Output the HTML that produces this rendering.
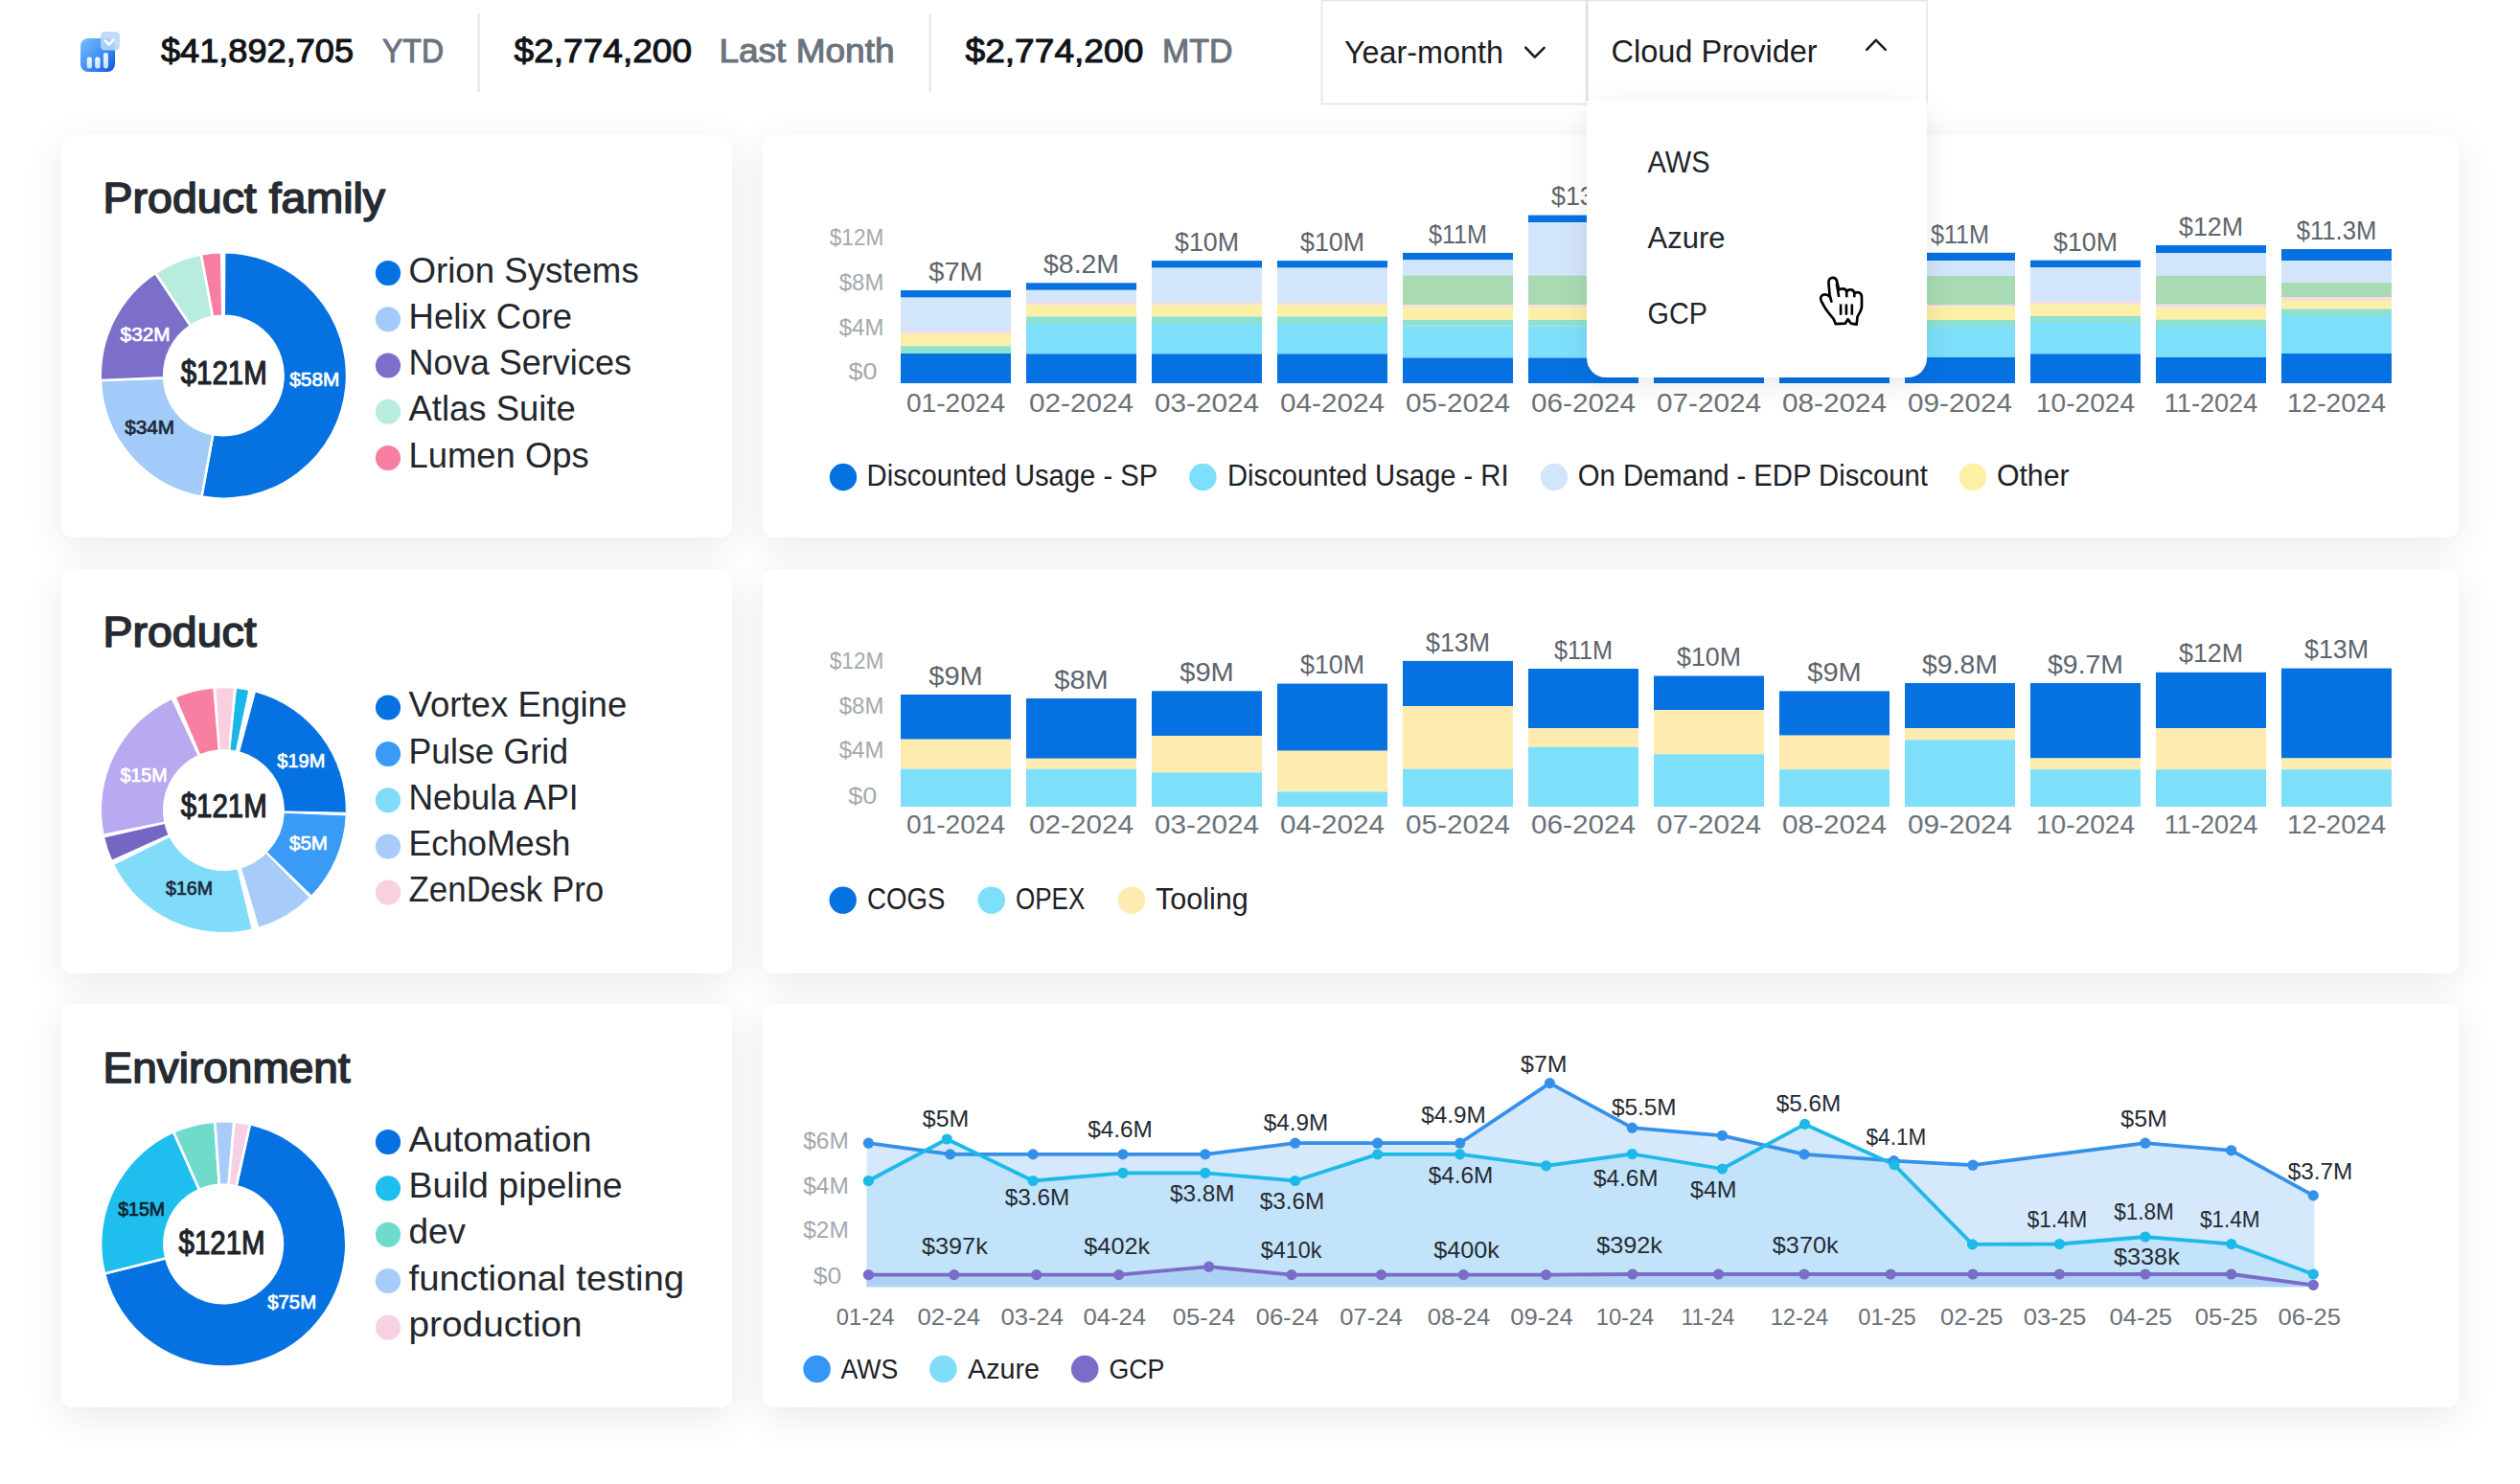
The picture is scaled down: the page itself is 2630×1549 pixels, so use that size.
<!DOCTYPE html>
<html><head><meta charset="utf-8"><title>Dashboard</title>
<style>
html,body{margin:0;padding:0;background:#fff;}
body{width:2630px;height:1549px;overflow:hidden;position:relative;font-family:"Liberation Sans", sans-serif;}
.card{position:absolute;background:#fff;border-radius:12px;box-shadow:0 10px 40px rgba(0,0,0,0.085);}
svg{position:absolute;left:0;top:0;font-family:"Liberation Sans", sans-serif;}
.dd{position:absolute;left:1656px;top:105px;width:355px;height:289px;background:#fff;border-radius:0 0 20px 20px;box-shadow:0 8px 30px rgba(0,0,0,0.085);}
</style></head>
<body>
<div class="card" style="left:64px;top:141px;width:700px;height:420px"></div><div class="card" style="left:795.5px;top:141px;width:1770.5px;height:420px"></div><div class="card" style="left:64px;top:593.5px;width:700px;height:422.5px"></div><div class="card" style="left:795.5px;top:593.5px;width:1770.5px;height:422.5px"></div><div class="card" style="left:64px;top:1048px;width:700px;height:421px"></div><div class="card" style="left:795.5px;top:1048px;width:1770.5px;height:421px"></div>
<svg width="2630" height="1549" viewBox="0 0 2630 1549">
<defs>
<linearGradient id="ig" x1="0" y1="0" x2="1" y2="1">
<stop offset="0" stop-color="#78c0ff"/><stop offset="0.55" stop-color="#3d8ef5"/><stop offset="1" stop-color="#0b55d8"/></linearGradient>
<linearGradient id="bg2" x1="0" y1="0" x2="0" y2="1">
<stop offset="0" stop-color="#ffffff" stop-opacity="0.95"/><stop offset="1" stop-color="#dbe9ff" stop-opacity="0.9"/></linearGradient>
<filter id="blur1" x="-20%" y="-20%" width="140%" height="140%"><feGaussianBlur stdDeviation="0.6"/></filter>
</defs>
<rect x="84" y="40" width="36" height="35" rx="8" fill="url(#ig)"/>
<rect x="90.7" y="59.6" width="5.2" height="12" rx="2.4" fill="url(#bg2)"/>
<rect x="99.2" y="59.6" width="5.4" height="12" rx="2.4" fill="url(#bg2)"/>
<rect x="107.9" y="55" width="5" height="16.6" rx="2.4" fill="url(#bg2)"/>
<rect x="105" y="33" width="20" height="19.5" rx="4.5" fill="#b9d6fb" fill-opacity="0.88" filter="url(#blur1)"/>
<polyline points="109.6,42.4 114,46.6 118.6,41.2" fill="none" stroke="#fff" stroke-width="2.4" stroke-linecap="round" stroke-linejoin="round"/>
<text x="168" y="65.4" font-size="35.5" fill="#111418" stroke="#111418" stroke-width="1.06" stroke-linejoin="round" textLength="201" lengthAdjust="spacingAndGlyphs">$41,892,705</text>
<text x="399" y="65.4" font-size="35.5" fill="#6b737d" stroke="#6b737d" stroke-width="1.06" stroke-linejoin="round" textLength="64" lengthAdjust="spacingAndGlyphs">YTD</text>
<text x="536.6" y="65.4" font-size="35.5" fill="#111418" stroke="#111418" stroke-width="1.06" stroke-linejoin="round" textLength="185.4" lengthAdjust="spacingAndGlyphs">$2,774,200</text>
<text x="750.4" y="65.4" font-size="35.5" fill="#6b737d" stroke="#6b737d" stroke-width="1.06" stroke-linejoin="round" textLength="183.2" lengthAdjust="spacingAndGlyphs">Last Month</text>
<text x="1007.5" y="65.4" font-size="35.5" fill="#111418" stroke="#111418" stroke-width="1.06" stroke-linejoin="round" textLength="185.8" lengthAdjust="spacingAndGlyphs">$2,774,200</text>
<text x="1213" y="65.4" font-size="35.5" fill="#6b737d" stroke="#6b737d" stroke-width="1.06" stroke-linejoin="round" textLength="73.5" lengthAdjust="spacingAndGlyphs">MTD</text>
<rect x="498.6" y="14" width="2" height="82" fill="#e3e4e6"/>
<rect x="969.6" y="14" width="2" height="82" fill="#e3e4e6"/>
<rect x="1379.5" y="0.5" width="277" height="108" fill="#fff" stroke="#e4e4e4" stroke-width="1.6"/>
<rect x="1656.5" y="0.5" width="354.5" height="108" fill="#fff" stroke="#e4e4e4" stroke-width="1.6"/>
<rect x="1654.8" y="0" width="2.4" height="106" fill="#e1e1e1"/>
<text x="1403" y="65.5" font-size="33" fill="#1c1d1f" textLength="166" lengthAdjust="spacingAndGlyphs">Year-month</text>
<polyline points="1592.2,49.6 1601.8,59.6 1611.6,49.8" fill="none" stroke="#1c1d1f" stroke-width="2.6" stroke-linecap="round" stroke-linejoin="round"/>
<text x="1681.4" y="65.3" font-size="33" fill="#1c1d1f" textLength="215.3" lengthAdjust="spacingAndGlyphs">Cloud Provider</text>
<polyline points="1948.2,51.8 1957.8,41.8 1967.8,51.8" fill="none" stroke="#1c1d1f" stroke-width="2.6" stroke-linecap="round" stroke-linejoin="round"/>
<text x="107.6" y="222" font-size="45" fill="#262b31" stroke="#262b31" stroke-width="1.62" stroke-linejoin="round" textLength="294.5" lengthAdjust="spacingAndGlyphs">Product family</text>
<path d="M234.07,263.30 A128.70000000000002,128.70000000000002 0 1 1 210.39,518.63 L222.28,453.20 A62.2,62.2 0 1 0 233.73,329.80 Z" fill="#0672e2" stroke="#fff" stroke-width="2.6" stroke-linejoin="miter"/>
<path d="M210.39,518.63 A128.70000000000002,128.70000000000002 0 0 1 104.79,396.94 L171.25,394.39 A62.2,62.2 0 0 0 222.28,453.20 Z" fill="#a3cbf9" stroke="#fff" stroke-width="2.6" stroke-linejoin="miter"/>
<path d="M104.79,396.94 A128.70000000000002,128.70000000000002 0 0 1 162.18,284.80 L198.98,340.19 A62.2,62.2 0 0 0 171.25,394.39 Z" fill="#7b6fca" stroke="#fff" stroke-width="2.6" stroke-linejoin="miter"/>
<path d="M162.18,284.80 A128.70000000000002,128.70000000000002 0 0 1 209.95,265.46 L222.06,330.84 A62.2,62.2 0 0 0 198.98,340.19 Z" fill="#b8ecdf" stroke="#fff" stroke-width="2.6" stroke-linejoin="miter"/>
<path d="M209.95,265.46 A128.70000000000002,128.70000000000002 0 0 1 231.15,263.32 L232.31,329.81 A62.2,62.2 0 0 0 222.06,330.84 Z" fill="#f77fa1" stroke="#fff" stroke-width="2.6" stroke-linejoin="miter"/>
<text x="233.7" y="400.5" font-size="34.5" fill="#1f242a" stroke="#1f242a" stroke-width="1.24" stroke-linejoin="round" text-anchor="middle" textLength="90" lengthAdjust="spacingAndGlyphs">$121M</text>
<text x="328.3" y="402.7" font-size="20" fill="#ffffff" stroke="#ffffff" stroke-width="0.72" stroke-linejoin="round" text-anchor="middle" textLength="52" lengthAdjust="spacingAndGlyphs">$58M</text>
<text x="151.6" y="355.6" font-size="20" fill="#ffffff" stroke="#ffffff" stroke-width="0.72" stroke-linejoin="round" text-anchor="middle" textLength="52" lengthAdjust="spacingAndGlyphs">$32M</text>
<text x="156.2" y="453.2" font-size="20" fill="#1e2a3a" stroke="#1e2a3a" stroke-width="0.72" stroke-linejoin="round" text-anchor="middle" textLength="52" lengthAdjust="spacingAndGlyphs">$34M</text>
<circle cx="405" cy="285" r="13.1" fill="#0672e2"/>
<text x="426.5" y="294.6" font-size="36" fill="#23272d" textLength="240.2" lengthAdjust="spacingAndGlyphs">Orion Systems</text>
<circle cx="405" cy="333.3" r="13.1" fill="#a3cbf9"/>
<text x="426.5" y="342.90000000000003" font-size="36" fill="#23272d" textLength="170.5" lengthAdjust="spacingAndGlyphs">Helix Core</text>
<circle cx="405" cy="381.5" r="13.1" fill="#7b6fca"/>
<text x="426.5" y="391.1" font-size="36" fill="#23272d" textLength="232.5" lengthAdjust="spacingAndGlyphs">Nova Services</text>
<circle cx="405" cy="429.7" r="13.1" fill="#b8ecdf"/>
<text x="426.5" y="439.3" font-size="36" fill="#23272d" textLength="174.2" lengthAdjust="spacingAndGlyphs">Atlas Suite</text>
<circle cx="405" cy="478" r="13.1" fill="#f77fa1"/>
<text x="426.5" y="487.6" font-size="36" fill="#23272d" textLength="188.2" lengthAdjust="spacingAndGlyphs">Lumen Ops</text>
<text x="107.6" y="675.4" font-size="45" fill="#262b31" stroke="#262b31" stroke-width="1.62" stroke-linejoin="round" textLength="160" lengthAdjust="spacingAndGlyphs">Product</text>
<path d="M266.50,722.06 A127.9,127.9 0 0 1 361.27,848.28 L296.39,846.92 A63.0,63.0 0 0 0 249.71,784.75 Z" fill="#0672e2" stroke="#fff" stroke-width="1.0" stroke-linejoin="miter"/>
<path d="M361.19,850.96 A127.9,127.9 0 0 1 325.09,934.77 L278.57,889.52 A63.0,63.0 0 0 0 296.34,848.24 Z" fill="#3a9bf7" stroke="#fff" stroke-width="1.0" stroke-linejoin="miter"/>
<path d="M323.21,936.67 A127.9,127.9 0 0 1 269.94,968.17 L251.40,905.97 A63.0,63.0 0 0 0 277.64,890.46 Z" fill="#a7ccf9" stroke="#fff" stroke-width="1.0" stroke-linejoin="miter"/>
<path d="M263.04,970.02 A127.9,127.9 0 0 1 118.84,902.47 L176.97,873.61 A63.0,63.0 0 0 0 248.00,906.88 Z" fill="#80dcf9" stroke="#fff" stroke-width="1.0" stroke-linejoin="miter"/>
<path d="M116.74,898.03 A127.9,127.9 0 0 1 108.68,873.94 L171.97,859.56 A63.0,63.0 0 0 0 175.94,871.43 Z" fill="#7466c4" stroke="#fff" stroke-width="1.0" stroke-linejoin="miter"/>
<path d="M108.02,870.88 A127.9,127.9 0 0 1 179.35,729.68 L206.78,788.50 A63.0,63.0 0 0 0 171.64,858.05 Z" fill="#b9a9f1" stroke="#fff" stroke-width="1.0" stroke-linejoin="miter"/>
<path d="M183.43,727.87 A127.9,127.9 0 0 1 222.70,718.15 L228.13,782.82 A63.0,63.0 0 0 0 208.78,787.61 Z" fill="#f77fa1" stroke="#fff" stroke-width="1.0" stroke-linejoin="miter"/>
<path d="M224.92,717.98 A127.9,127.9 0 0 1 244.32,718.17 L238.78,782.83 A63.0,63.0 0 0 0 229.22,782.74 Z" fill="#f9d0df" stroke="#fff" stroke-width="1.0" stroke-linejoin="miter"/>
<path d="M246.55,718.38 A127.9,127.9 0 0 1 259.77,720.45 L246.39,783.95 A63.0,63.0 0 0 0 239.88,782.93 Z" fill="#19b6e6" stroke="#fff" stroke-width="1.0" stroke-linejoin="miter"/>
<text x="233.7" y="852.7" font-size="34.5" fill="#1f242a" stroke="#1f242a" stroke-width="1.24" stroke-linejoin="round" text-anchor="middle" textLength="90" lengthAdjust="spacingAndGlyphs">$121M</text>
<text x="314.3" y="800.9" font-size="20" fill="#ffffff" stroke="#ffffff" stroke-width="0.72" stroke-linejoin="round" text-anchor="middle" textLength="50" lengthAdjust="spacingAndGlyphs">$19M</text>
<text x="322" y="886.8" font-size="20" fill="#ffffff" stroke="#ffffff" stroke-width="0.72" stroke-linejoin="round" text-anchor="middle" textLength="40" lengthAdjust="spacingAndGlyphs">$5M</text>
<text x="150" y="816.4" font-size="20" fill="#ffffff" stroke="#ffffff" stroke-width="0.72" stroke-linejoin="round" text-anchor="middle" textLength="49" lengthAdjust="spacingAndGlyphs">$15M</text>
<text x="197.5" y="933.6" font-size="20" fill="#1e2a3a" stroke="#1e2a3a" stroke-width="0.72" stroke-linejoin="round" text-anchor="middle" textLength="49" lengthAdjust="spacingAndGlyphs">$16M</text>
<circle cx="405" cy="738.5" r="13.1" fill="#0672e2"/>
<text x="426.5" y="748.1" font-size="36" fill="#23272d" textLength="227.79999999999998" lengthAdjust="spacingAndGlyphs">Vortex Engine</text>
<circle cx="405" cy="787" r="13.1" fill="#3a9bf7"/>
<text x="426.5" y="796.6" font-size="36" fill="#23272d" textLength="166.5" lengthAdjust="spacingAndGlyphs">Pulse Grid</text>
<circle cx="405" cy="835.3" r="13.1" fill="#80dcf9"/>
<text x="426.5" y="844.9" font-size="36" fill="#23272d" textLength="177.2" lengthAdjust="spacingAndGlyphs">Nebula API</text>
<circle cx="405" cy="883.6" r="13.1" fill="#a7ccf9"/>
<text x="426.5" y="893.2" font-size="36" fill="#23272d" textLength="168.89999999999998" lengthAdjust="spacingAndGlyphs">EchoMesh</text>
<circle cx="405" cy="931.6" r="13.1" fill="#f9d0df"/>
<text x="426.5" y="941.2" font-size="36" fill="#23272d" textLength="203.7" lengthAdjust="spacingAndGlyphs">ZenDesk Pro</text>
<text x="107.6" y="1129.7" font-size="45" fill="#262b31" stroke="#262b31" stroke-width="1.62" stroke-linejoin="round" textLength="258" lengthAdjust="spacingAndGlyphs">Environment</text>
<path d="M260.93,1173.34 A128.1,128.1 0 1 1 108.91,1329.39 L173.33,1313.33 A61.7,61.7 0 1 0 246.55,1238.16 Z" fill="#0672e2" stroke="#fff" stroke-width="2.6" stroke-linejoin="miter"/>
<path d="M108.91,1329.39 A128.1,128.1 0 0 1 181.10,1181.37 L208.10,1242.03 A61.7,61.7 0 0 0 173.33,1313.33 Z" fill="#1ebfee" stroke="#fff" stroke-width="2.6" stroke-linejoin="miter"/>
<path d="M181.10,1181.37 A128.1,128.1 0 0 1 224.26,1170.61 L228.90,1236.85 A61.7,61.7 0 0 0 208.10,1242.03 Z" fill="#6fdccb" stroke="#fff" stroke-width="2.6" stroke-linejoin="miter"/>
<path d="M224.26,1170.61 A128.1,128.1 0 0 1 244.36,1170.79 L238.58,1236.93 A61.7,61.7 0 0 0 228.90,1236.85 Z" fill="#a7ccf9" stroke="#fff" stroke-width="2.6" stroke-linejoin="miter"/>
<path d="M244.36,1170.79 A128.1,128.1 0 0 1 260.93,1173.34 L246.55,1238.16 A61.7,61.7 0 0 0 238.58,1236.93 Z" fill="#f6d1e4" stroke="#fff" stroke-width="2.6" stroke-linejoin="miter"/>
<text x="231.6" y="1308.7" font-size="34.5" fill="#1f242a" stroke="#1f242a" stroke-width="1.24" stroke-linejoin="round" text-anchor="middle" textLength="90" lengthAdjust="spacingAndGlyphs">$121M</text>
<text x="147.7" y="1268.5" font-size="20" fill="#10202c" stroke="#10202c" stroke-width="0.72" stroke-linejoin="round" text-anchor="middle" textLength="49" lengthAdjust="spacingAndGlyphs">$15M</text>
<text x="304.7" y="1365.7" font-size="20" fill="#ffffff" stroke="#ffffff" stroke-width="0.72" stroke-linejoin="round" text-anchor="middle" textLength="51" lengthAdjust="spacingAndGlyphs">$75M</text>
<circle cx="405" cy="1192" r="13.1" fill="#0672e2"/>
<text x="426.5" y="1201.6" font-size="36" fill="#23272d" textLength="190.89999999999998" lengthAdjust="spacingAndGlyphs">Automation</text>
<circle cx="405" cy="1240.4" r="13.1" fill="#1ebfee"/>
<text x="426.5" y="1250.0" font-size="36" fill="#23272d" textLength="223.2" lengthAdjust="spacingAndGlyphs">Build pipeline</text>
<circle cx="405" cy="1288.8" r="13.1" fill="#6fdccb"/>
<text x="426.5" y="1298.3999999999999" font-size="36" fill="#23272d" textLength="59.5" lengthAdjust="spacingAndGlyphs">dev</text>
<circle cx="405" cy="1337" r="13.1" fill="#a7ccf9"/>
<text x="426.5" y="1346.6" font-size="36" fill="#23272d" textLength="287.7" lengthAdjust="spacingAndGlyphs">functional testing</text>
<circle cx="405" cy="1385.7" r="13.1" fill="#f6d1e4"/>
<text x="426.5" y="1395.3" font-size="36" fill="#23272d" textLength="181.2" lengthAdjust="spacingAndGlyphs">production</text>
<text x="922.3" y="256" font-size="23.5" fill="#a4a9ae" text-anchor="end" textLength="56.5" lengthAdjust="spacingAndGlyphs">$12M</text>
<text x="922.3" y="303.1" font-size="23.5" fill="#a4a9ae" text-anchor="end" textLength="46.5" lengthAdjust="spacingAndGlyphs">$8M</text>
<text x="922.3" y="349.6" font-size="23.5" fill="#a4a9ae" text-anchor="end" textLength="46.5" lengthAdjust="spacingAndGlyphs">$4M</text>
<text x="915.5" y="396" font-size="23.5" fill="#a4a9ae" text-anchor="end" textLength="30" lengthAdjust="spacingAndGlyphs">$0</text>
<rect x="940" y="303" width="115" height="7.60" fill="#0672e2"/>
<rect x="940" y="310.6" width="115" height="35.20" fill="#d3e5fb"/>
<rect x="940" y="345.8" width="115" height="3.10" fill="#f8dcdc"/>
<rect x="940" y="348.9" width="115" height="12.30" fill="#fcf0a6"/>
<rect x="940" y="361.2" width="115" height="7.80" fill="#8fe1cf"/>
<rect x="940" y="369.0" width="115" height="31.00" fill="#0672e2"/>
<text x="997.5" y="292.8" font-size="28" fill="#5d646c" text-anchor="middle" textLength="56.5" lengthAdjust="spacingAndGlyphs">$7M</text>
<text x="997.5" y="430" font-size="27.6" fill="#6b7178" text-anchor="middle" textLength="103.2" lengthAdjust="spacingAndGlyphs">01-2024</text>
<rect x="1071" y="295.3" width="115" height="7.50" fill="#0672e2"/>
<rect x="1071" y="302.8" width="115" height="13.00" fill="#d3e5fb"/>
<rect x="1071" y="315.8" width="115" height="2.40" fill="#f8dcdc"/>
<rect x="1071" y="318.2" width="115" height="12.20" fill="#fcf0a6"/>
<rect x="1071" y="330.4" width="115" height="7.60" fill="#8fe1cf"/>
<rect x="1071" y="338" width="115" height="31.40" fill="#7edffb"/>
<rect x="1071" y="369.4" width="115" height="30.60" fill="#0672e2"/>
<text x="1128.5" y="285.1" font-size="28" fill="#5d646c" text-anchor="middle" textLength="78.8" lengthAdjust="spacingAndGlyphs">$8.2M</text>
<text x="1128.5" y="430" font-size="27.6" fill="#6b7178" text-anchor="middle" textLength="109.0" lengthAdjust="spacingAndGlyphs">02-2024</text>
<rect x="1202" y="272.1" width="115" height="7.50" fill="#0672e2"/>
<rect x="1202" y="279.6" width="115" height="36.20" fill="#d3e5fb"/>
<rect x="1202" y="315.8" width="115" height="2.40" fill="#f8dcdc"/>
<rect x="1202" y="318.2" width="115" height="12.20" fill="#fcf0a6"/>
<rect x="1202" y="330.4" width="115" height="7.60" fill="#8fe1cf"/>
<rect x="1202" y="338" width="115" height="31.40" fill="#7edffb"/>
<rect x="1202" y="369.4" width="115" height="30.60" fill="#0672e2"/>
<text x="1259.5" y="261.90000000000003" font-size="28" fill="#5d646c" text-anchor="middle" textLength="67.0" lengthAdjust="spacingAndGlyphs">$10M</text>
<text x="1259.5" y="430" font-size="27.6" fill="#6b7178" text-anchor="middle" textLength="109.0" lengthAdjust="spacingAndGlyphs">03-2024</text>
<rect x="1333" y="272.1" width="115" height="7.50" fill="#0672e2"/>
<rect x="1333" y="279.6" width="115" height="36.20" fill="#d3e5fb"/>
<rect x="1333" y="315.8" width="115" height="2.40" fill="#f8dcdc"/>
<rect x="1333" y="318.2" width="115" height="12.20" fill="#fcf0a6"/>
<rect x="1333" y="330.4" width="115" height="7.60" fill="#8fe1cf"/>
<rect x="1333" y="338" width="115" height="31.40" fill="#7edffb"/>
<rect x="1333" y="369.4" width="115" height="30.60" fill="#0672e2"/>
<text x="1390.5" y="261.90000000000003" font-size="28" fill="#5d646c" text-anchor="middle" textLength="67.0" lengthAdjust="spacingAndGlyphs">$10M</text>
<text x="1390.5" y="430" font-size="27.6" fill="#6b7178" text-anchor="middle" textLength="109.0" lengthAdjust="spacingAndGlyphs">04-2024</text>
<rect x="1464" y="263.9" width="115" height="7.50" fill="#0672e2"/>
<rect x="1464" y="271.4" width="115" height="16.00" fill="#d3e5fb"/>
<rect x="1464" y="287.4" width="115" height="30.80" fill="#a8dbb3"/>
<rect x="1464" y="318.2" width="115" height="2.70" fill="#f8dcdc"/>
<rect x="1464" y="320.9" width="115" height="13.00" fill="#fcf0a6"/>
<rect x="1464" y="333.9" width="115" height="6.80" fill="#8fe1cf"/>
<rect x="1464" y="340.7" width="115" height="32.80" fill="#7edffb"/>
<rect x="1464" y="373.5" width="115" height="26.50" fill="#0672e2"/>
<text x="1521.5" y="253.7" font-size="28" fill="#5d646c" text-anchor="middle" textLength="61.2" lengthAdjust="spacingAndGlyphs">$11M</text>
<text x="1521.5" y="430" font-size="27.6" fill="#6b7178" text-anchor="middle" textLength="109.0" lengthAdjust="spacingAndGlyphs">05-2024</text>
<rect x="1595" y="224.6" width="115" height="7.60" fill="#0672e2"/>
<rect x="1595" y="232.2" width="115" height="55.20" fill="#d3e5fb"/>
<rect x="1595" y="287.4" width="115" height="30.80" fill="#a8dbb3"/>
<rect x="1595" y="318.2" width="115" height="2.70" fill="#f8dcdc"/>
<rect x="1595" y="320.9" width="115" height="13.00" fill="#fcf0a6"/>
<rect x="1595" y="333.9" width="115" height="6.80" fill="#8fe1cf"/>
<rect x="1595" y="340.7" width="115" height="32.80" fill="#7edffb"/>
<rect x="1595" y="373.5" width="115" height="26.50" fill="#0672e2"/>
<text x="1652.5" y="214.4" font-size="28" fill="#5d646c" text-anchor="middle" textLength="67.0" lengthAdjust="spacingAndGlyphs">$13M</text>
<text x="1652.5" y="430" font-size="27.6" fill="#6b7178" text-anchor="middle" textLength="109.0" lengthAdjust="spacingAndGlyphs">06-2024</text>
<rect x="1726" y="263.9" width="115" height="7.50" fill="#0672e2"/>
<rect x="1726" y="271.4" width="115" height="16.00" fill="#d3e5fb"/>
<rect x="1726" y="287.4" width="115" height="30.80" fill="#a8dbb3"/>
<rect x="1726" y="318.2" width="115" height="2.70" fill="#f8dcdc"/>
<rect x="1726" y="320.9" width="115" height="13.00" fill="#fcf0a6"/>
<rect x="1726" y="333.9" width="115" height="6.80" fill="#8fe1cf"/>
<rect x="1726" y="340.7" width="115" height="32.80" fill="#7edffb"/>
<rect x="1726" y="373.5" width="115" height="26.50" fill="#0672e2"/>
<text x="1783.5" y="253.7" font-size="28" fill="#5d646c" text-anchor="middle" textLength="67.0" lengthAdjust="spacingAndGlyphs">$12M</text>
<text x="1783.5" y="430" font-size="27.6" fill="#6b7178" text-anchor="middle" textLength="109.0" lengthAdjust="spacingAndGlyphs">07-2024</text>
<rect x="1857" y="263.9" width="115" height="7.50" fill="#0672e2"/>
<rect x="1857" y="271.4" width="115" height="16.00" fill="#d3e5fb"/>
<rect x="1857" y="287.4" width="115" height="30.80" fill="#a8dbb3"/>
<rect x="1857" y="318.2" width="115" height="2.70" fill="#f8dcdc"/>
<rect x="1857" y="320.9" width="115" height="13.00" fill="#fcf0a6"/>
<rect x="1857" y="333.9" width="115" height="6.80" fill="#8fe1cf"/>
<rect x="1857" y="340.7" width="115" height="32.80" fill="#7edffb"/>
<rect x="1857" y="373.5" width="115" height="26.50" fill="#0672e2"/>
<text x="1914.5" y="253.7" font-size="28" fill="#5d646c" text-anchor="middle" textLength="67.0" lengthAdjust="spacingAndGlyphs">$12M</text>
<text x="1914.5" y="430" font-size="27.6" fill="#6b7178" text-anchor="middle" textLength="109.0" lengthAdjust="spacingAndGlyphs">08-2024</text>
<rect x="1988" y="263.8" width="115" height="8.20" fill="#0672e2"/>
<rect x="1988" y="272" width="115" height="16.00" fill="#d3e5fb"/>
<rect x="1988" y="288" width="115" height="30.00" fill="#a8dbb3"/>
<rect x="1988" y="318" width="115" height="2.50" fill="#f8dcdc"/>
<rect x="1988" y="320.5" width="115" height="13.50" fill="#fcf0a6"/>
<rect x="1988" y="334" width="115" height="7.00" fill="#8fe1cf"/>
<rect x="1988" y="341" width="115" height="32.00" fill="#7edffb"/>
<rect x="1988" y="373" width="115" height="27.00" fill="#0672e2"/>
<text x="2045.5" y="253.60000000000002" font-size="28" fill="#5d646c" text-anchor="middle" textLength="61.2" lengthAdjust="spacingAndGlyphs">$11M</text>
<text x="2045.5" y="430" font-size="27.6" fill="#6b7178" text-anchor="middle" textLength="109.0" lengthAdjust="spacingAndGlyphs">09-2024</text>
<rect x="2119" y="271.7" width="115" height="7.60" fill="#0672e2"/>
<rect x="2119" y="279.3" width="115" height="35.30" fill="#d3e5fb"/>
<rect x="2119" y="314.6" width="115" height="3.20" fill="#f8dcdc"/>
<rect x="2119" y="317.8" width="115" height="12.20" fill="#fcf0a6"/>
<rect x="2119" y="330" width="115" height="7.00" fill="#8fe1cf"/>
<rect x="2119" y="337" width="115" height="32.40" fill="#7edffb"/>
<rect x="2119" y="369.4" width="115" height="30.60" fill="#0672e2"/>
<text x="2176.5" y="261.5" font-size="28" fill="#5d646c" text-anchor="middle" textLength="67.0" lengthAdjust="spacingAndGlyphs">$10M</text>
<text x="2176.5" y="430" font-size="27.6" fill="#6b7178" text-anchor="middle" textLength="103.2" lengthAdjust="spacingAndGlyphs">10-2024</text>
<rect x="2250" y="256" width="115" height="8.00" fill="#0672e2"/>
<rect x="2250" y="264" width="115" height="23.60" fill="#d3e5fb"/>
<rect x="2250" y="287.6" width="115" height="30.20" fill="#a8dbb3"/>
<rect x="2250" y="317.8" width="115" height="3.90" fill="#f8dcdc"/>
<rect x="2250" y="321.7" width="115" height="11.90" fill="#fcf0a6"/>
<rect x="2250" y="333.6" width="115" height="7.40" fill="#8fe1cf"/>
<rect x="2250" y="341" width="115" height="32.00" fill="#7edffb"/>
<rect x="2250" y="373" width="115" height="27.00" fill="#0672e2"/>
<text x="2307.5" y="245.8" font-size="28" fill="#5d646c" text-anchor="middle" textLength="67.0" lengthAdjust="spacingAndGlyphs">$12M</text>
<text x="2307.5" y="430" font-size="27.6" fill="#6b7178" text-anchor="middle" textLength="97.4" lengthAdjust="spacingAndGlyphs">11-2024</text>
<rect x="2381" y="260" width="115" height="12.00" fill="#0672e2"/>
<rect x="2381" y="272" width="115" height="23.00" fill="#d3e5fb"/>
<rect x="2381" y="295" width="115" height="15.00" fill="#a8dbb3"/>
<rect x="2381" y="310" width="115" height="4.00" fill="#f8dcdc"/>
<rect x="2381" y="314" width="115" height="8.50" fill="#fcf0a6"/>
<rect x="2381" y="322.5" width="115" height="7.50" fill="#8fe1cf"/>
<rect x="2381" y="330" width="115" height="39.00" fill="#7edffb"/>
<rect x="2381" y="369" width="115" height="31.00" fill="#0672e2"/>
<text x="2438.5" y="249.8" font-size="28" fill="#5d646c" text-anchor="middle" textLength="83.5" lengthAdjust="spacingAndGlyphs">$11.3M</text>
<text x="2438.5" y="430" font-size="27.6" fill="#6b7178" text-anchor="middle" textLength="103.2" lengthAdjust="spacingAndGlyphs">12-2024</text>
<circle cx="880" cy="498" r="14.2" fill="#0672e2"/>
<text x="904.6" y="507" font-size="31" fill="#1e2126" textLength="303.7" lengthAdjust="spacingAndGlyphs">Discounted Usage - SP</text>
<circle cx="1255.4" cy="498" r="14.2" fill="#7edffb"/>
<text x="1281" y="507" font-size="31" fill="#1e2126" textLength="293.5" lengthAdjust="spacingAndGlyphs">Discounted Usage - RI</text>
<circle cx="1622" cy="498" r="14.2" fill="#d3e5fb"/>
<text x="1646.8" y="507" font-size="31" fill="#1e2126" textLength="365" lengthAdjust="spacingAndGlyphs">On Demand - EDP Discount</text>
<circle cx="2059" cy="498" r="14.2" fill="#fcf0a6"/>
<text x="2084" y="507" font-size="31" fill="#1e2126" textLength="75.5" lengthAdjust="spacingAndGlyphs">Other</text>
<text x="922.3" y="697.6" font-size="23.5" fill="#a4a9ae" text-anchor="end" textLength="56.5" lengthAdjust="spacingAndGlyphs">$12M</text>
<text x="922.3" y="745" font-size="23.5" fill="#a4a9ae" text-anchor="end" textLength="46.5" lengthAdjust="spacingAndGlyphs">$8M</text>
<text x="922.3" y="791" font-size="23.5" fill="#a4a9ae" text-anchor="end" textLength="46.5" lengthAdjust="spacingAndGlyphs">$4M</text>
<text x="915.3" y="838.5" font-size="23.5" fill="#a4a9ae" text-anchor="end" textLength="30" lengthAdjust="spacingAndGlyphs">$0</text>
<rect x="940" y="725" width="115" height="46.70" fill="#0672e2"/>
<rect x="940" y="771.7" width="115" height="31.00" fill="#fdebb0"/>
<rect x="940" y="802.7" width="115" height="39.30" fill="#7edffb"/>
<text x="997.5" y="714.6" font-size="28" fill="#5d646c" text-anchor="middle" textLength="56.5" lengthAdjust="spacingAndGlyphs">$9M</text>
<text x="997.5" y="870.3" font-size="27.6" fill="#6b7178" text-anchor="middle" textLength="103.2" lengthAdjust="spacingAndGlyphs">01-2024</text>
<rect x="1071" y="729" width="115" height="62.80" fill="#0672e2"/>
<rect x="1071" y="791.8" width="115" height="10.90" fill="#fdebb0"/>
<rect x="1071" y="802.7" width="115" height="39.30" fill="#7edffb"/>
<text x="1128.5" y="718.6" font-size="28" fill="#5d646c" text-anchor="middle" textLength="56.5" lengthAdjust="spacingAndGlyphs">$8M</text>
<text x="1128.5" y="870.3" font-size="27.6" fill="#6b7178" text-anchor="middle" textLength="109.0" lengthAdjust="spacingAndGlyphs">02-2024</text>
<rect x="1202" y="721.3" width="115" height="46.70" fill="#0672e2"/>
<rect x="1202" y="768" width="115" height="38.40" fill="#fdebb0"/>
<rect x="1202" y="806.4" width="115" height="35.60" fill="#7edffb"/>
<text x="1259.5" y="710.9" font-size="28" fill="#5d646c" text-anchor="middle" textLength="56.5" lengthAdjust="spacingAndGlyphs">$9M</text>
<text x="1259.5" y="870.3" font-size="27.6" fill="#6b7178" text-anchor="middle" textLength="109.0" lengthAdjust="spacingAndGlyphs">03-2024</text>
<rect x="1333" y="713.6" width="115" height="70.10" fill="#0672e2"/>
<rect x="1333" y="783.7" width="115" height="42.70" fill="#fdebb0"/>
<rect x="1333" y="826.4" width="115" height="15.60" fill="#7edffb"/>
<text x="1390.5" y="703.2" font-size="28" fill="#5d646c" text-anchor="middle" textLength="67.0" lengthAdjust="spacingAndGlyphs">$10M</text>
<text x="1390.5" y="870.3" font-size="27.6" fill="#6b7178" text-anchor="middle" textLength="109.0" lengthAdjust="spacingAndGlyphs">04-2024</text>
<rect x="1464" y="689.9" width="115" height="47.10" fill="#0672e2"/>
<rect x="1464" y="737" width="115" height="65.70" fill="#fdebb0"/>
<rect x="1464" y="802.7" width="115" height="39.30" fill="#7edffb"/>
<text x="1521.5" y="679.5" font-size="28" fill="#5d646c" text-anchor="middle" textLength="67.0" lengthAdjust="spacingAndGlyphs">$13M</text>
<text x="1521.5" y="870.3" font-size="27.6" fill="#6b7178" text-anchor="middle" textLength="109.0" lengthAdjust="spacingAndGlyphs">05-2024</text>
<rect x="1595" y="698" width="115" height="62.00" fill="#0672e2"/>
<rect x="1595" y="760" width="115" height="19.80" fill="#fdebb0"/>
<rect x="1595" y="779.8" width="115" height="62.20" fill="#7edffb"/>
<text x="1652.5" y="687.6" font-size="28" fill="#5d646c" text-anchor="middle" textLength="61.2" lengthAdjust="spacingAndGlyphs">$11M</text>
<text x="1652.5" y="870.3" font-size="27.6" fill="#6b7178" text-anchor="middle" textLength="109.0" lengthAdjust="spacingAndGlyphs">06-2024</text>
<rect x="1726" y="705.5" width="115" height="35.50" fill="#0672e2"/>
<rect x="1726" y="741" width="115" height="46.30" fill="#fdebb0"/>
<rect x="1726" y="787.3" width="115" height="54.70" fill="#7edffb"/>
<text x="1783.5" y="695.1" font-size="28" fill="#5d646c" text-anchor="middle" textLength="67.0" lengthAdjust="spacingAndGlyphs">$10M</text>
<text x="1783.5" y="870.3" font-size="27.6" fill="#6b7178" text-anchor="middle" textLength="109.0" lengthAdjust="spacingAndGlyphs">07-2024</text>
<rect x="1857" y="721.4" width="115" height="46.30" fill="#0672e2"/>
<rect x="1857" y="767.7" width="115" height="35.50" fill="#fdebb0"/>
<rect x="1857" y="803.2" width="115" height="38.80" fill="#7edffb"/>
<text x="1914.5" y="711.0" font-size="28" fill="#5d646c" text-anchor="middle" textLength="56.5" lengthAdjust="spacingAndGlyphs">$9M</text>
<text x="1914.5" y="870.3" font-size="27.6" fill="#6b7178" text-anchor="middle" textLength="109.0" lengthAdjust="spacingAndGlyphs">08-2024</text>
<rect x="1988" y="713" width="115" height="47.00" fill="#0672e2"/>
<rect x="1988" y="760" width="115" height="12.30" fill="#fdebb0"/>
<rect x="1988" y="772.3" width="115" height="69.70" fill="#7edffb"/>
<text x="2045.5" y="702.6" font-size="28" fill="#5d646c" text-anchor="middle" textLength="78.8" lengthAdjust="spacingAndGlyphs">$9.8M</text>
<text x="2045.5" y="870.3" font-size="27.6" fill="#6b7178" text-anchor="middle" textLength="109.0" lengthAdjust="spacingAndGlyphs">09-2024</text>
<rect x="2119" y="713" width="115" height="78.50" fill="#0672e2"/>
<rect x="2119" y="791.5" width="115" height="11.70" fill="#fdebb0"/>
<rect x="2119" y="803.2" width="115" height="38.80" fill="#7edffb"/>
<text x="2176.5" y="702.6" font-size="28" fill="#5d646c" text-anchor="middle" textLength="78.8" lengthAdjust="spacingAndGlyphs">$9.7M</text>
<text x="2176.5" y="870.3" font-size="27.6" fill="#6b7178" text-anchor="middle" textLength="103.2" lengthAdjust="spacingAndGlyphs">10-2024</text>
<rect x="2250" y="701.8" width="115" height="58.20" fill="#0672e2"/>
<rect x="2250" y="760" width="115" height="43.20" fill="#fdebb0"/>
<rect x="2250" y="803.2" width="115" height="38.80" fill="#7edffb"/>
<text x="2307.5" y="691.4" font-size="28" fill="#5d646c" text-anchor="middle" textLength="67.0" lengthAdjust="spacingAndGlyphs">$12M</text>
<text x="2307.5" y="870.3" font-size="27.6" fill="#6b7178" text-anchor="middle" textLength="97.4" lengthAdjust="spacingAndGlyphs">11-2024</text>
<rect x="2381" y="697.6" width="115" height="93.90" fill="#0672e2"/>
<rect x="2381" y="791.5" width="115" height="11.70" fill="#fdebb0"/>
<rect x="2381" y="803.2" width="115" height="38.80" fill="#7edffb"/>
<text x="2438.5" y="687.2" font-size="28" fill="#5d646c" text-anchor="middle" textLength="67.0" lengthAdjust="spacingAndGlyphs">$13M</text>
<text x="2438.5" y="870.3" font-size="27.6" fill="#6b7178" text-anchor="middle" textLength="103.2" lengthAdjust="spacingAndGlyphs">12-2024</text>
<circle cx="879.7" cy="939.6" r="14.2" fill="#0672e2"/>
<text x="905" y="948.6" font-size="31" fill="#1e2126" textLength="81.3" lengthAdjust="spacingAndGlyphs">COGS</text>
<circle cx="1034.8" cy="939.6" r="14.2" fill="#7edffb"/>
<text x="1060" y="948.6" font-size="31" fill="#1e2126" textLength="72.3" lengthAdjust="spacingAndGlyphs">OPEX</text>
<circle cx="1181" cy="939.6" r="14.2" fill="#fdebb0"/>
<text x="1206" y="948.6" font-size="31" fill="#1e2126" textLength="96.8" lengthAdjust="spacingAndGlyphs">Tooling</text>
<text x="885.8" y="1198.5" font-size="23" fill="#a3a8ad" text-anchor="end" textLength="47.5" lengthAdjust="spacingAndGlyphs">$6M</text>
<text x="885.8" y="1245.7" font-size="23" fill="#a3a8ad" text-anchor="end" textLength="47.5" lengthAdjust="spacingAndGlyphs">$4M</text>
<text x="885.8" y="1292.3" font-size="23" fill="#a3a8ad" text-anchor="end" textLength="47.5" lengthAdjust="spacingAndGlyphs">$2M</text>
<text x="878.3" y="1340" font-size="23" fill="#a3a8ad" text-anchor="end" textLength="29.5" lengthAdjust="spacingAndGlyphs">$0</text>
<defs><clipPath id="azclip"><polygon points="904.5,1232.5 906.4,1232.5 988.3,1189.0 1078.1,1232.5 1171.9,1224.3 1257.8,1224.3 1351.7,1232.5 1437.7,1204.9 1523.6,1204.9 1613.6,1216.8 1703.4,1204.5 1797.4,1220.0 1883.6,1173.4 1977.0,1215.8 2058.5,1298.9 2149.4,1298.5 2238.9,1291.0 2328.7,1298.5 2414.3,1330.0 2415.5,1330.0 2415.5,1343.2 904.5,1343.2"/></clipPath></defs>
<polygon points="904.5,1193.2 906.4,1193.2 991.7,1204.9 1078.1,1204.9 1171.9,1204.9 1257.8,1204.9 1351.7,1193.2 1437.7,1193.2 1523.6,1193.2 1617.4,1130.6 1703.4,1177.2 1797.4,1185.3 1883.0,1204.9 1976.6,1211.7 2059.0,1216.2 2238.9,1193.2 2328.7,1200.8 2414.3,1247.9 2415.5,1247.9 2415.5,1343.2 904.5,1343.2" fill="#d6e9fc"/>
<polygon points="904.5,1232.5 906.4,1232.5 988.3,1189.0 1078.1,1232.5 1171.9,1224.3 1257.8,1224.3 1351.7,1232.5 1437.7,1204.9 1523.6,1204.9 1613.6,1216.8 1703.4,1204.5 1797.4,1220.0 1883.6,1173.4 1977.0,1215.8 2058.5,1298.9 2149.4,1298.5 2238.9,1291.0 2328.7,1298.5 2414.3,1330.0 2415.5,1330.0 2415.5,1343.2 904.5,1343.2" fill="#d6e9fc"/>
<polygon points="904.5,1193.2 906.4,1193.2 991.7,1204.9 1078.1,1204.9 1171.9,1204.9 1257.8,1204.9 1351.7,1193.2 1437.7,1193.2 1523.6,1193.2 1617.4,1130.6 1703.4,1177.2 1797.4,1185.3 1883.0,1204.9 1976.6,1211.7 2059.0,1216.2 2238.9,1193.2 2328.7,1200.8 2414.3,1247.9 2415.5,1247.9 2415.5,1343.2 904.5,1343.2" fill="#c3e3fb" clip-path="url(#azclip)"/>
<polygon points="904.5,1330.6 906.4,1330.6 995.8,1330.6 1081.7,1330.6 1167.7,1330.6 1261.7,1322.2 1347.9,1330.6 1441.5,1330.6 1527.4,1330.6 1613.6,1330.6 1703.8,1330.0 1793.6,1330.0 1883.0,1330.0 1973.2,1330.0 2059.0,1330.0 2149.4,1330.0 2238.9,1330.0 2328.7,1330.0 2414.3,1341.3 2415.5,1341.3 2415.5,1343.2 904.5,1343.2" fill="#aed2f5"/>
<polyline points="906.4,1330.6 995.8,1330.6 1081.7,1330.6 1167.7,1330.6 1261.7,1322.2 1347.9,1330.6 1441.5,1330.6 1527.4,1330.6 1613.6,1330.6 1703.8,1330.0 1793.6,1330.0 1883.0,1330.0 1973.2,1330.0 2059.0,1330.0 2149.4,1330.0 2238.9,1330.0 2328.7,1330.0 2414.3,1341.3" fill="none" stroke="#7a6cc7" stroke-width="3.8" stroke-linejoin="round"/>
<polyline points="906.4,1193.2 991.7,1204.9 1078.1,1204.9 1171.9,1204.9 1257.8,1204.9 1351.7,1193.2 1437.7,1193.2 1523.6,1193.2 1617.4,1130.6 1703.4,1177.2 1797.4,1185.3 1883.0,1204.9 1976.6,1211.7 2059.0,1216.2 2238.9,1193.2 2328.7,1200.8 2414.3,1247.9" fill="none" stroke="#3590ea" stroke-width="3.8" stroke-linejoin="round"/>
<polyline points="906.4,1232.5 988.3,1189.0 1078.1,1232.5 1171.9,1224.3 1257.8,1224.3 1351.7,1232.5 1437.7,1204.9 1523.6,1204.9 1613.6,1216.8 1703.4,1204.5 1797.4,1220.0 1883.6,1173.4 1977.0,1215.8 2058.5,1298.9 2149.4,1298.5 2238.9,1291.0 2328.7,1298.5 2414.3,1330.0" fill="none" stroke="#1db9e8" stroke-width="3.8" stroke-linejoin="round"/>
<circle cx="906.4" cy="1330.6" r="5.6" fill="#7a6cc7"/>
<circle cx="995.8" cy="1330.6" r="5.6" fill="#7a6cc7"/>
<circle cx="1081.7" cy="1330.6" r="5.6" fill="#7a6cc7"/>
<circle cx="1167.7" cy="1330.6" r="5.6" fill="#7a6cc7"/>
<circle cx="1261.7" cy="1322.2" r="5.6" fill="#7a6cc7"/>
<circle cx="1347.9" cy="1330.6" r="5.6" fill="#7a6cc7"/>
<circle cx="1441.5" cy="1330.6" r="5.6" fill="#7a6cc7"/>
<circle cx="1527.4" cy="1330.6" r="5.6" fill="#7a6cc7"/>
<circle cx="1613.6" cy="1330.6" r="5.6" fill="#7a6cc7"/>
<circle cx="1703.8" cy="1330" r="5.6" fill="#7a6cc7"/>
<circle cx="1793.6" cy="1330" r="5.6" fill="#7a6cc7"/>
<circle cx="1883" cy="1330" r="5.6" fill="#7a6cc7"/>
<circle cx="1973.2" cy="1330" r="5.6" fill="#7a6cc7"/>
<circle cx="2059" cy="1330" r="5.6" fill="#7a6cc7"/>
<circle cx="2149.4" cy="1330" r="5.6" fill="#7a6cc7"/>
<circle cx="2238.9" cy="1330" r="5.6" fill="#7a6cc7"/>
<circle cx="2328.7" cy="1330" r="5.6" fill="#7a6cc7"/>
<circle cx="2414.3" cy="1341.3" r="5.6" fill="#7a6cc7"/>
<circle cx="906.4" cy="1193.2" r="5.6" fill="#3590ea"/>
<circle cx="991.7" cy="1204.9" r="5.6" fill="#3590ea"/>
<circle cx="1078.1" cy="1204.9" r="5.6" fill="#3590ea"/>
<circle cx="1171.9" cy="1204.9" r="5.6" fill="#3590ea"/>
<circle cx="1257.8" cy="1204.9" r="5.6" fill="#3590ea"/>
<circle cx="1351.7" cy="1193.2" r="5.6" fill="#3590ea"/>
<circle cx="1437.7" cy="1193.2" r="5.6" fill="#3590ea"/>
<circle cx="1523.6" cy="1193.2" r="5.6" fill="#3590ea"/>
<circle cx="1617.4" cy="1130.6" r="5.6" fill="#3590ea"/>
<circle cx="1703.4" cy="1177.2" r="5.6" fill="#3590ea"/>
<circle cx="1797.4" cy="1185.3" r="5.6" fill="#3590ea"/>
<circle cx="1883" cy="1204.9" r="5.6" fill="#3590ea"/>
<circle cx="1976.6" cy="1211.7" r="5.6" fill="#3590ea"/>
<circle cx="2059" cy="1216.2" r="5.6" fill="#3590ea"/>
<circle cx="2238.9" cy="1193.2" r="5.6" fill="#3590ea"/>
<circle cx="2328.7" cy="1200.8" r="5.6" fill="#3590ea"/>
<circle cx="2414.3" cy="1247.9" r="5.6" fill="#3590ea"/>
<circle cx="906.4" cy="1232.5" r="5.6" fill="#1db9e8"/>
<circle cx="988.3" cy="1189" r="5.6" fill="#1db9e8"/>
<circle cx="1078.1" cy="1232.5" r="5.6" fill="#1db9e8"/>
<circle cx="1171.9" cy="1224.3" r="5.6" fill="#1db9e8"/>
<circle cx="1257.8" cy="1224.3" r="5.6" fill="#1db9e8"/>
<circle cx="1351.7" cy="1232.5" r="5.6" fill="#1db9e8"/>
<circle cx="1437.7" cy="1204.9" r="5.6" fill="#1db9e8"/>
<circle cx="1523.6" cy="1204.9" r="5.6" fill="#1db9e8"/>
<circle cx="1613.6" cy="1216.8" r="5.6" fill="#1db9e8"/>
<circle cx="1703.4" cy="1204.5" r="5.6" fill="#1db9e8"/>
<circle cx="1797.4" cy="1220" r="5.6" fill="#1db9e8"/>
<circle cx="1883.6" cy="1173.4" r="5.6" fill="#1db9e8"/>
<circle cx="1977" cy="1215.8" r="5.6" fill="#1db9e8"/>
<circle cx="2058.5" cy="1298.9" r="5.6" fill="#1db9e8"/>
<circle cx="2149.4" cy="1298.5" r="5.6" fill="#1db9e8"/>
<circle cx="2238.9" cy="1291" r="5.6" fill="#1db9e8"/>
<circle cx="2328.7" cy="1298.5" r="5.6" fill="#1db9e8"/>
<circle cx="2414.3" cy="1330" r="5.6" fill="#1db9e8"/>
<text x="987" y="1176.1000000000001" font-size="24" fill="#262c33" text-anchor="middle" textLength="48.4" lengthAdjust="spacingAndGlyphs">$5M</text>
<text x="1169" y="1187.4" font-size="24" fill="#262c33" text-anchor="middle" textLength="67.5" lengthAdjust="spacingAndGlyphs">$4.6M</text>
<text x="1352.6" y="1179.9" font-size="24" fill="#262c33" text-anchor="middle" textLength="67.5" lengthAdjust="spacingAndGlyphs">$4.9M</text>
<text x="1517" y="1172.4" font-size="24" fill="#262c33" text-anchor="middle" textLength="67.5" lengthAdjust="spacingAndGlyphs">$4.9M</text>
<text x="1611.3" y="1118.6000000000001" font-size="24" fill="#262c33" text-anchor="middle" textLength="48.4" lengthAdjust="spacingAndGlyphs">$7M</text>
<text x="1715.7" y="1163.9" font-size="24" fill="#262c33" text-anchor="middle" textLength="67.5" lengthAdjust="spacingAndGlyphs">$5.5M</text>
<text x="1887.4" y="1160.1000000000001" font-size="24" fill="#262c33" text-anchor="middle" textLength="67.5" lengthAdjust="spacingAndGlyphs">$5.6M</text>
<text x="1978.9" y="1195.0" font-size="24" fill="#262c33" text-anchor="middle" textLength="62.6" lengthAdjust="spacingAndGlyphs">$4.1M</text>
<text x="2237.5" y="1176.1000000000001" font-size="24" fill="#262c33" text-anchor="middle" textLength="48.4" lengthAdjust="spacingAndGlyphs">$5M</text>
<text x="2421.5" y="1230.9" font-size="24" fill="#262c33" text-anchor="middle" textLength="67.5" lengthAdjust="spacingAndGlyphs">$3.7M</text>
<text x="1082.6" y="1258.2" font-size="24" fill="#262c33" text-anchor="middle" textLength="67.5" lengthAdjust="spacingAndGlyphs">$3.6M</text>
<text x="1254.8" y="1254.2" font-size="24" fill="#262c33" text-anchor="middle" textLength="67.5" lengthAdjust="spacingAndGlyphs">$3.8M</text>
<text x="1348.5" y="1262.0" font-size="24" fill="#262c33" text-anchor="middle" textLength="67.5" lengthAdjust="spacingAndGlyphs">$3.6M</text>
<text x="1524.5" y="1234.6000000000001" font-size="24" fill="#262c33" text-anchor="middle" textLength="67.5" lengthAdjust="spacingAndGlyphs">$4.6M</text>
<text x="1696.8" y="1238.4" font-size="24" fill="#262c33" text-anchor="middle" textLength="67.5" lengthAdjust="spacingAndGlyphs">$4.6M</text>
<text x="1788.3" y="1249.7" font-size="24" fill="#262c33" text-anchor="middle" textLength="48.4" lengthAdjust="spacingAndGlyphs">$4M</text>
<text x="2147" y="1280.9" font-size="24" fill="#262c33" text-anchor="middle" textLength="62.6" lengthAdjust="spacingAndGlyphs">$1.4M</text>
<text x="2237.5" y="1273.4" font-size="24" fill="#262c33" text-anchor="middle" textLength="62.6" lengthAdjust="spacingAndGlyphs">$1.8M</text>
<text x="2327.2" y="1280.9" font-size="24" fill="#262c33" text-anchor="middle" textLength="62.6" lengthAdjust="spacingAndGlyphs">$1.4M</text>
<text x="996.4" y="1308.8000000000002" font-size="24" fill="#262c33" text-anchor="middle" textLength="68.7" lengthAdjust="spacingAndGlyphs">$397k</text>
<text x="1165.7" y="1308.8000000000002" font-size="24" fill="#262c33" text-anchor="middle" textLength="68.7" lengthAdjust="spacingAndGlyphs">$402k</text>
<text x="1347.5" y="1312.9" font-size="24" fill="#262c33" text-anchor="middle" textLength="63.7" lengthAdjust="spacingAndGlyphs">$410k</text>
<text x="1530.6" y="1312.9" font-size="24" fill="#262c33" text-anchor="middle" textLength="68.7" lengthAdjust="spacingAndGlyphs">$400k</text>
<text x="1700.6" y="1308.2" font-size="24" fill="#262c33" text-anchor="middle" textLength="68.7" lengthAdjust="spacingAndGlyphs">$392k</text>
<text x="1884.2" y="1308.2" font-size="24" fill="#262c33" text-anchor="middle" textLength="68.7" lengthAdjust="spacingAndGlyphs">$370k</text>
<text x="2240.4" y="1320.4" font-size="24" fill="#262c33" text-anchor="middle" textLength="68.7" lengthAdjust="spacingAndGlyphs">$338k</text>
<text x="903.1" y="1382.7" font-size="23.5" fill="#6b7178" text-anchor="middle" textLength="60.5" lengthAdjust="spacingAndGlyphs">01-24</text>
<text x="990.2" y="1382.7" font-size="23.5" fill="#6b7178" text-anchor="middle" textLength="65.5" lengthAdjust="spacingAndGlyphs">02-24</text>
<text x="1077.2" y="1382.7" font-size="23.5" fill="#6b7178" text-anchor="middle" textLength="65.5" lengthAdjust="spacingAndGlyphs">03-24</text>
<text x="1163.2" y="1382.7" font-size="23.5" fill="#6b7178" text-anchor="middle" textLength="65.5" lengthAdjust="spacingAndGlyphs">04-24</text>
<text x="1256.4" y="1382.7" font-size="23.5" fill="#6b7178" text-anchor="middle" textLength="65.5" lengthAdjust="spacingAndGlyphs">05-24</text>
<text x="1343.4" y="1382.7" font-size="23.5" fill="#6b7178" text-anchor="middle" textLength="65.5" lengthAdjust="spacingAndGlyphs">06-24</text>
<text x="1431.1" y="1382.7" font-size="23.5" fill="#6b7178" text-anchor="middle" textLength="65.5" lengthAdjust="spacingAndGlyphs">07-24</text>
<text x="1522.6" y="1382.7" font-size="23.5" fill="#6b7178" text-anchor="middle" textLength="65.5" lengthAdjust="spacingAndGlyphs">08-24</text>
<text x="1609" y="1382.7" font-size="23.5" fill="#6b7178" text-anchor="middle" textLength="65.5" lengthAdjust="spacingAndGlyphs">09-24</text>
<text x="1696" y="1382.7" font-size="23.5" fill="#6b7178" text-anchor="middle" textLength="60.5" lengthAdjust="spacingAndGlyphs">10-24</text>
<text x="1782.5" y="1382.7" font-size="23.5" fill="#6b7178" text-anchor="middle" textLength="55.5" lengthAdjust="spacingAndGlyphs">11-24</text>
<text x="1877.9" y="1382.7" font-size="23.5" fill="#6b7178" text-anchor="middle" textLength="60.5" lengthAdjust="spacingAndGlyphs">12-24</text>
<text x="1969.5" y="1382.7" font-size="23.5" fill="#6b7178" text-anchor="middle" textLength="60.5" lengthAdjust="spacingAndGlyphs">01-25</text>
<text x="2057.7" y="1382.7" font-size="23.5" fill="#6b7178" text-anchor="middle" textLength="65.5" lengthAdjust="spacingAndGlyphs">02-25</text>
<text x="2144.4" y="1382.7" font-size="23.5" fill="#6b7178" text-anchor="middle" textLength="65.5" lengthAdjust="spacingAndGlyphs">03-25</text>
<text x="2234.2" y="1382.7" font-size="23.5" fill="#6b7178" text-anchor="middle" textLength="65.5" lengthAdjust="spacingAndGlyphs">04-25</text>
<text x="2323.5" y="1382.7" font-size="23.5" fill="#6b7178" text-anchor="middle" textLength="65.5" lengthAdjust="spacingAndGlyphs">05-25</text>
<text x="2410.2" y="1382.7" font-size="23.5" fill="#6b7178" text-anchor="middle" textLength="65.5" lengthAdjust="spacingAndGlyphs">06-25</text>
<circle cx="852.6" cy="1429" r="14.3" fill="#3596f6"/>
<text x="877.5" y="1438.7" font-size="30" fill="#1e2126" textLength="59.8" lengthAdjust="spacingAndGlyphs">AWS</text>
<circle cx="984.4" cy="1429" r="14.3" fill="#80ddfa"/>
<text x="1010" y="1438.7" font-size="30" fill="#1e2126" textLength="75" lengthAdjust="spacingAndGlyphs">Azure</text>
<circle cx="1132.2" cy="1429" r="14.3" fill="#7a6cc7"/>
<text x="1157.4" y="1438.7" font-size="30" fill="#1e2126" textLength="58" lengthAdjust="spacingAndGlyphs">GCP</text>
</svg>
<div class="dd"></div>
<svg width="2630" height="1549" viewBox="0 0 2630 1549" style="pointer-events:none">
<text x="1719.6" y="180" font-size="31" fill="#222529" textLength="65" lengthAdjust="spacingAndGlyphs">AWS</text>
<text x="1719.6" y="259.4" font-size="31" fill="#222529" textLength="81" lengthAdjust="spacingAndGlyphs">Azure</text>
<text x="1719.6" y="338" font-size="31" fill="#222529" textLength="62.3" lengthAdjust="spacingAndGlyphs">GCP</text>
<g transform="translate(1890,280)"><path d="M19.6,28 L18.4,15.2 C18.2,11.6 20.2,9.9 22.9,9.9 C25.2,9.9 26.6,11.3 27.1,13.6 L29.2,22.6 C29.9,21.6 31.3,21.3 33.1,21.3 C35.5,21.3 36.8,22.6 37.2,24.6 C37.9,22.9 39.4,22.3 41.2,22.3 C43.6,22.3 45,23.7 45.3,26.2 C46,25.4 47,25.1 48.3,25.1 C51.2,25.1 53,27.3 53,30.8 L53,39.6 C53,44.2 50.2,47.4 48.6,50.3 L47.6,58.6 L41.9,57.6 C40.6,56.2 39.6,54.4 38.6,53.2 C37.6,54.6 36.7,56.6 35.6,57.7 L25.8,58.1 C24.8,56.2 24.4,54.2 23.4,52.7 C20.2,48.6 17.1,45.3 14.6,41.2 L10.8,34.4 C9.3,31.4 10.3,28.2 13.2,27.6 C16.1,27 18.6,28.6 20.1,30.2 L21.4,34.6 Z" fill="#fff" stroke="#000" stroke-width="2.7" stroke-linejoin="round"/><path d="M26.8,15.8 L29.2,30 M37.2,24.6 L37.3,30.2 M45.3,26.2 L45.3,30.2 M31.1,37.6 V48.8 M36.9,37.6 V48.8 M42.8,37.6 V48.8" fill="none" stroke="#000" stroke-width="2.6" stroke-linecap="butt"/></g>
</svg>
</body></html>
